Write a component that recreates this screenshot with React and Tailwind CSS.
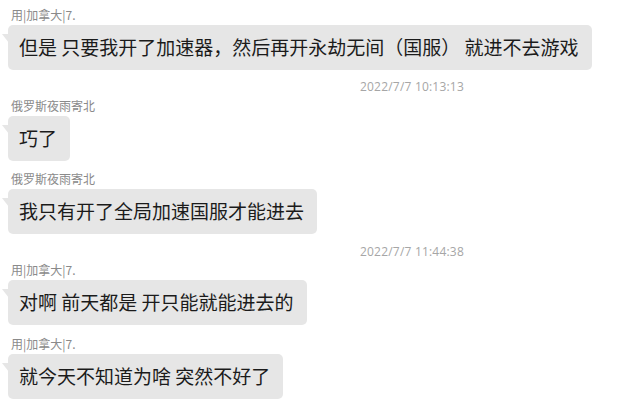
import React from "react";

const cjk = { fontFamily: '"Noto Sans CJK SC", "Noto Sans", sans-serif' };
const latin = { fontFamily: '"Open Sans", "Noto Sans CJK SC", sans-serif' };

function Name({ children }) {
  return (
    <div className="h-4 leading-4 text-[12px] text-[#8a8a8a] pl-[3px] mb-[2px]" style={cjk}>
      {children}
    </div>
  );
}

function Bubble({ children }) {
  return (
    <div className="relative inline-block">
      <svg className="absolute left-[-6px] top-[9px]" width="7" height="9" viewBox="0 0 7 9">
        <polygon points="0,0 7,0 7,9" fill="#e6e6e6" />
      </svg>
      <div
        className="bg-[#e6e6e6] rounded-[5px] pl-[11px] pr-[13px] h-[45px] flex items-center text-[19px] text-[#1b1b1b] whitespace-pre"
        style={cjk}
      >
        {children}
      </div>
    </div>
  );
}

function Time({ children }) {
  return (
    <div className="h-4 leading-4 text-[12px] tracking-[0.2px] text-[#a6a6a6] pl-[352px]" style={latin}>
      {children}
    </div>
  );
}

export default function App() {
  return (
    <div className="w-[641px] h-[407px] bg-white overflow-hidden pl-2 pt-[7px]">
      <Name>用|加拿大|7.</Name>
      <Bubble>但是 只要我开了加速器，然后再开永劫无间（国服） 就进不去游戏</Bubble>
      <div className="mt-[9px]">
        <Time>2022/7/7 10:13:13</Time>
      </div>
      <div className="mt-[3px]">
        <Name>俄罗斯夜雨寄北</Name>
        <Bubble>巧了</Bubble>
      </div>
      <div className="mt-[10px]">
        <Name>俄罗斯夜雨寄北</Name>
        <Bubble>我只有开了全局加速国服才能进去</Bubble>
      </div>
      <div className="mt-[10px]">
        <Time>2022/7/7 11:44:38</Time>
      </div>
      <div className="mt-[2px]">
        <Name>用|加拿大|7.</Name>
        <Bubble>对啊 前天都是 开只能就能进去的</Bubble>
      </div>
      <div className="mt-[11px]">
        <Name>用|加拿大|7.</Name>
        <Bubble>就今天不知道为啥 突然不好了</Bubble>
      </div>
    </div>
  );
}
